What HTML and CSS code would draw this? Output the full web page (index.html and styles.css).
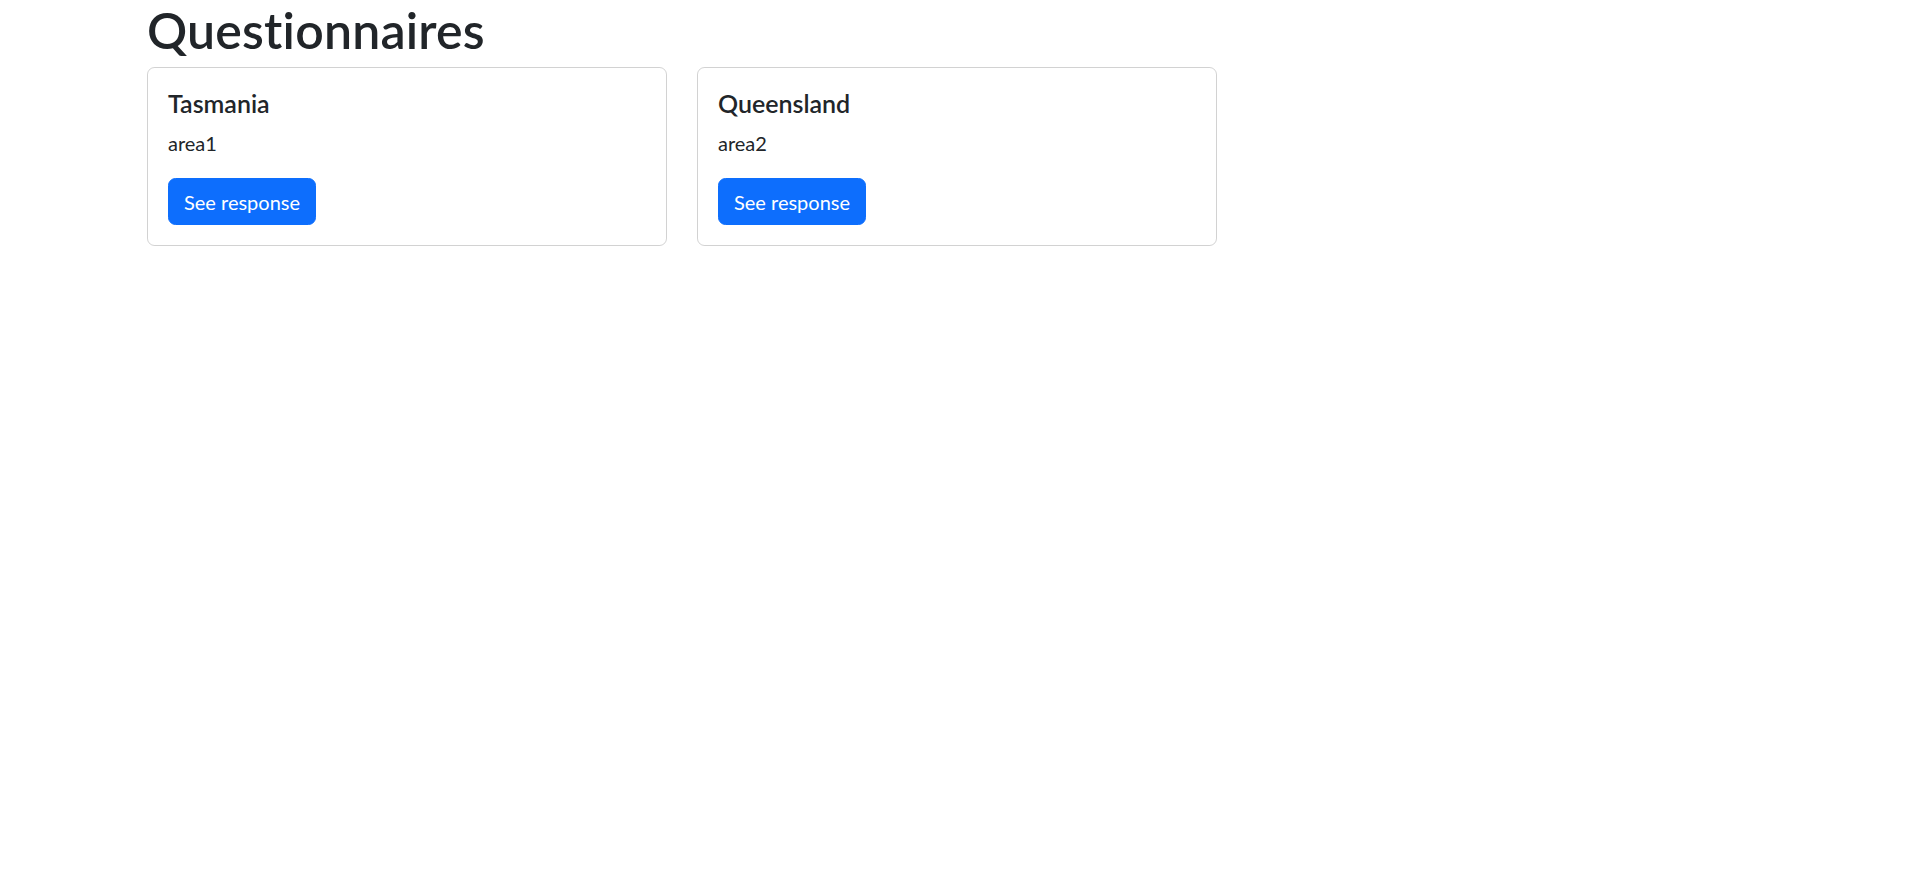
FILE: index.html
```html
<!DOCTYPE html>
<html lang="en">
<head>
<meta charset="utf-8">
<title>Questionnaires</title>
<link rel="stylesheet" href="styles.css">
</head>
<body>
<main class="container">
  <h1 class="page-title">Questionnaires</h1>
  <div class="card-row">
    <div class="card">
      <h5 class="card-title">Tasmania</h5>
      <p class="card-text">area1</p>
      <a class="btn" href="#">See response</a>
    </div>
    <div class="card">
      <h5 class="card-title">Queensland</h5>
      <p class="card-text">area2</p>
      <a class="btn" href="#">See response</a>
    </div>
  </div>
</main>
</body>
</html>
```

FILE: styles.css
```css
html, body {
  margin: 0;
  padding: 0;
  background: #fff;
}
body {
  font-family: "Lato", "Noto Sans", sans-serif;
  font-variant-ligatures: none;
  color: #212529;
  font-size: 20px;
  line-height: 1.5;
}
.container {
  padding-left: 147px;
}
.page-title {
  margin: 0 0 7px 0;
  font-size: 50px;
  font-weight: 600;
  line-height: 60px;
  letter-spacing: 0.2px;
}
.card-row {
  display: flex;
  gap: 30px;
}
.card {
  box-sizing: border-box;
  width: 520px;
  padding: 20px;
  border: 1px solid rgba(0, 0, 0, 0.175);
  border-radius: 7.5px;
}
.card-title {
  margin: 0 0 10px 0;
  font-size: 25px;
  font-weight: 600;
  line-height: 30px;
}
.card-text {
  margin: 0 0 20px 0;
  font-size: 20px;
  line-height: 30px;
}
.btn {
  display: inline-block;
  padding: 7.5px 15px;
  border: 1px solid #0d6efd;
  border-radius: 7.5px;
  background: #0d6efd;
  color: #fff;
  font-size: 20px;
  line-height: 30px;
  text-decoration: none;
}
```
